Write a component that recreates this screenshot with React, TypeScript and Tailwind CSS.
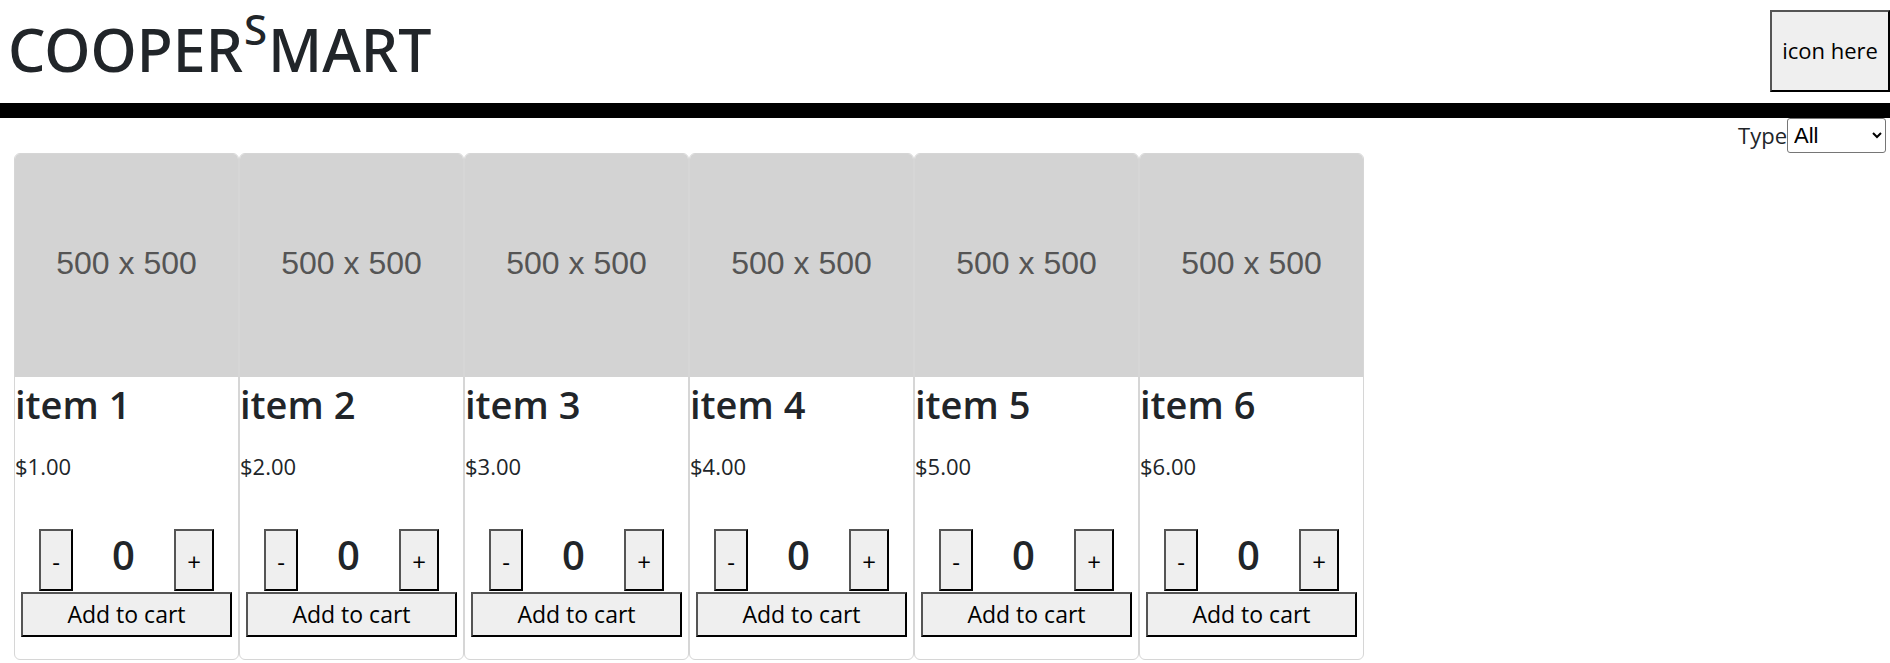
import { useState } from "react";

const items = [1, 2, 3, 4, 5, 6].map((n) => ({
  id: n,
  name: `item ${n}`,
  price: n,
}));

const btn =
  "bg-[#efefef] text-black border-2 border-t-[#555] border-l-[#555] border-r-black border-b-black";

function ItemCard({ name, price }: { name: string; price: number }) {
  const [count, setCount] = useState(0);
  return (
    <div className="w-[225px] shrink-0 border border-[#d6d6d6] rounded-[6px] overflow-hidden flex flex-col pb-[22px]">
      <div className="h-[223px] bg-[#d3d3d3] flex items-center justify-center pb-[6px] font-['Liberation_Sans'] text-[32px] text-[#555]">
        500 x 500
      </div>
      <h2 className="mt-[3px] text-[38px] leading-[48px] font-semibold">{name}</h2>
      <p className="mt-[23px] text-[22px] leading-[30px]">${price.toFixed(2)}</p>
      <div className="mt-[48px] flex justify-center h-[62px]">
        <button
          className={`${btn} w-[34px] text-[24px] pt-[4px]`}
          onClick={() => setCount(Math.max(0, count - 1))}
        >
          -
        </button>
        <div className="w-[101px] text-center text-[40px] leading-[52px] font-semibold">{count}</div>
        <button className={`${btn} w-[40px] text-[24px] pt-[4px]`} onClick={() => setCount(count + 1)}>
          +
        </button>
      </div>
      <button className={`${btn} mt-[1px] mx-auto w-[211px] h-[45px] text-[23px]`}>Add to cart</button>
    </div>
  );
}

export default function App() {
  return (
    <div className="font-['Open_Sans',sans-serif] text-[#212529] bg-white min-h-screen">
      <header className="h-[118px] border-b-[15px] border-black flex items-center justify-between">
        <h1 className="pl-[8px] -mt-[4px] font-['Noto_Sans',sans-serif] text-[59px] leading-none font-medium flex items-start">
          <span>COOPER</span>
          <span className="text-[42px] -mt-[12px] mx-[1px]">S</span>
          <span>MART</span>
        </h1>
        <button className={`${btn} w-[120px] h-[82px] text-[22px] -mt-[2px]`}>icon here</button>
      </header>
      <div className="flex justify-end items-center pr-[4px]">
        <label className="text-[22px]">Type</label>
        <select className="h-[35px] w-[99px] border border-[#767676] rounded-[3px] text-[22px] font-['Liberation_Sans'] text-black px-[2px]">
          <option>All</option>
        </select>
      </div>
      <div className="flex pl-[14px]">
        {items.map((it) => (
          <ItemCard key={it.id} name={it.name} price={it.price} />
        ))}
      </div>
    </div>
  );
}
